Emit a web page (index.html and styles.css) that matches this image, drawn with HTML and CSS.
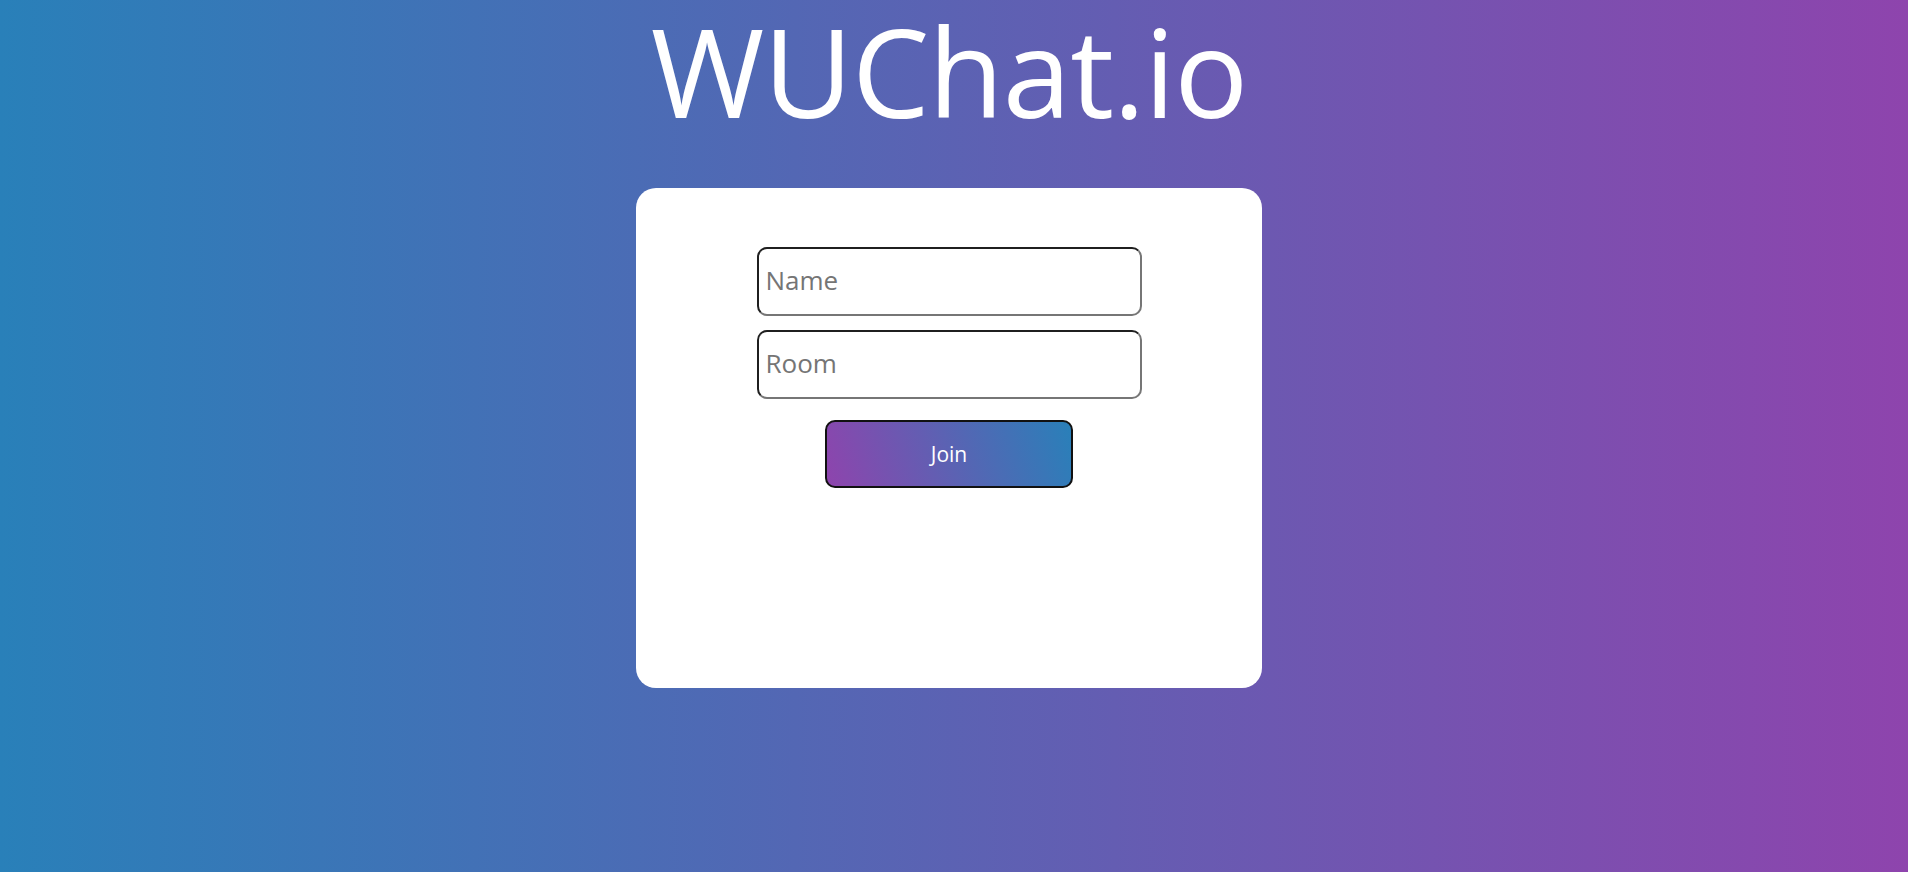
FILE: index.html
```html
<!DOCTYPE html>
<html lang="en">
<head>
<meta charset="utf-8">
<title>WUChat.io</title>
<link rel="stylesheet" href="styles.css">
</head>
<body>
<main class="page">
  <h1 class="title">WUChat.io</h1>
  <form class="card">
    <input class="field" type="text" placeholder="Name">
    <input class="field" type="text" placeholder="Room">
    <button class="join" type="button">Join</button>
  </form>
</main>
</body>
</html>
```

FILE: styles.css
```css
* {
  box-sizing: border-box;
}

html, body {
  margin: 0;
  height: 100%;
}

body {
  background: linear-gradient(to right, #2980b9, #8e44ad);
  font-family: "Open Sans", "Noto Sans", sans-serif;
  overflow: hidden;
}

.page {
  display: flex;
  flex-direction: column;
  align-items: center;
  padding-right: 10px;
}

.title {
  margin: 1px 0 47px;
  font-size: 123px;
  line-height: 140px;
  font-weight: 400;
  color: #ffffff;
  letter-spacing: -1px;
}

.card {
  width: 626px;
  height: 500px;
  background: #ffffff;
  border-radius: 20px;
  padding-top: 59px;
  display: flex;
  flex-direction: column;
  align-items: center;
}

.field {
  width: 385px;
  height: 69px;
  margin: 0 0 14px;
  padding: 0 7px 3px;
  border: 2px solid;
  border-color: #1f1f1f #767676 #767676 #1f1f1f;
  border-radius: 10px;
  font-family: inherit;
  font-size: 26px;
  color: #222;
  background: #fff;
  outline: none;
}

.field::placeholder {
  color: #757575;
}

.join {
  margin-top: 7px;
  width: 248px;
  height: 68px;
  border: 2px solid #111;
  border-radius: 10px;
  background: linear-gradient(72deg, #8e44ad 0%, #2980b9 100%);
  color: #ffffff;
  font-family: inherit;
  font-size: 21px;
  cursor: pointer;
}
```
